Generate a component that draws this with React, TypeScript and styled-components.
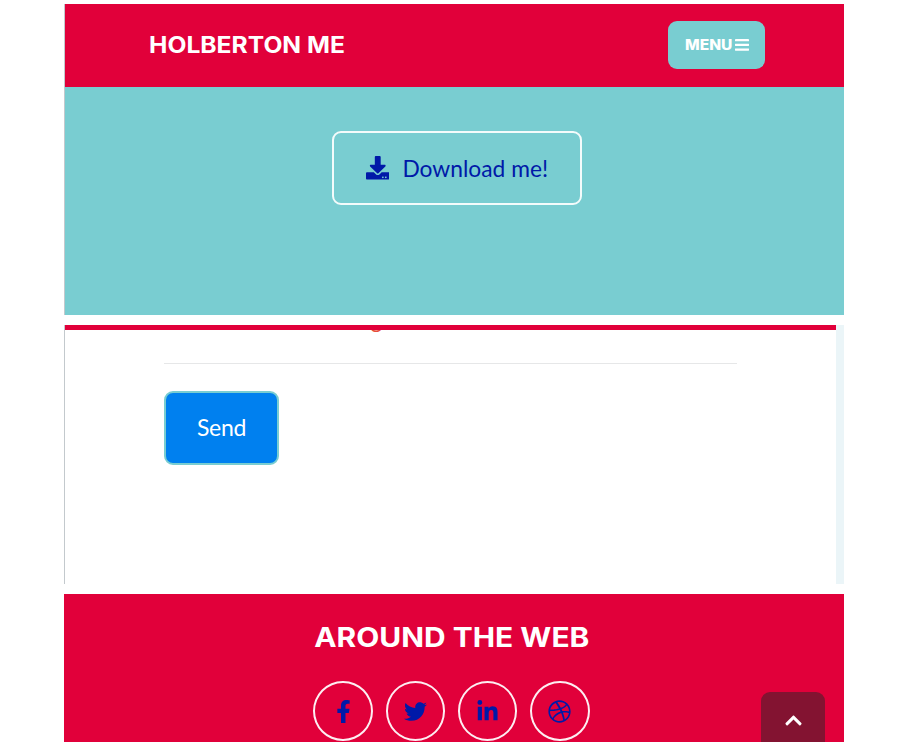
import React from 'react';
import styled, { createGlobalStyle } from 'styled-components';
import { FaChevronUp, FaDownload, FaDribbble, FaFacebookF, FaLinkedinIn, FaTwitter } from 'react-icons/fa';

const red = '#e1003a';
const teal = '#79cdd1';
const navy = '#0019a8';

const GlobalStyle = createGlobalStyle`
  * { box-sizing: border-box; }
  body { margin: 0; background: #fff; overflow: hidden; font-family: Lato, sans-serif; }
`;

const Page = styled.div`
  width: 907px;
  height: 742px;
  padding: 4px 63px 0 64px;
  overflow: hidden;
  display: flex;
  flex-direction: column;
  gap: 10px;
`;

const Panel = styled.section<{ $height: number }>`
  flex: none;
  height: ${p => p.$height}px;
  border-left: 1px solid #c3c9cd;
  overflow: hidden;
`;

const Navbar = styled.header`
  height: 83px;
  padding: 0 79px 0 84px;
  background: ${red};
  display: flex;
  align-items: center;
  justify-content: space-between;
`;

const Brand = styled.div`
  margin-top: -2px;
  font: 700 22.4px/30px Inter, sans-serif;
  color: #fff;
  white-space: nowrap;
  transform: scaleX(1.1);
  transform-origin: left center;
`;

const MenuButton = styled.button`
  width: 97px;
  height: 48px;
  margin-top: -2px;
  padding: 0 0 0 17px;
  border: 0;
  border-radius: 9px;
  background: ${teal};
  color: #fff;
  display: flex;
  align-items: center;
  font: 800 14px/20px Inter, sans-serif;
`;

const MenuLabel = styled.span`
  width: 50px;
  text-align: left;
  transform: scaleX(1.11);
  transform-origin: left center;
`;

const Hero = styled.div`
  height: 228px;
  padding-top: 44px;
  padding-left: 5px;
  background: ${teal};
  display: flex;
  justify-content: center;
  align-items: flex-start;
`;

const DownloadButton = styled.button`
  width: 250px;
  height: 74px;
  padding: 0;
  border: 2px solid #f4fbfb;
  border-radius: 9px;
  background: transparent;
  color: ${navy};
  display: flex;
  align-items: center;
  justify-content: center;
  gap: 13px;
  font: 400 22.8px/36px Lato, sans-serif;
`;

const FormPanel = styled(Panel)`
  border-right: 8px solid #ebf5f8;
`;

const NavEdge = styled.div`
  height: 5px;
  background: ${red};
`;

const Form = styled.div`
  padding: 0 99px;
`;

const ErrorClip = styled.div`
  height: 33px;
  overflow: hidden;
`;

const ErrorText = styled.p`
  margin: -24px 0 0;
  color: #e74c3c;
  font-size: 22.7px;
  line-height: 28px;
`;

const Rule = styled.hr`
  margin: 0 0 27px;
  border: 0;
  height: 1px;
  background: #e6e7e8;
`;

const SendButton = styled.button`
  width: 115px;
  height: 74px;
  padding: 0 0 2px;
  border: 2px solid ${teal};
  border-radius: 9px;
  background: #0080ef;
  color: #fff;
  font: 400 23px/34px Lato, sans-serif;
  letter-spacing: -0.3px;
`;

const Footer = styled.footer`
  position: relative;
  flex: none;
  width: 780px;
  height: 148px;
  background: ${red};
  padding: 26px 5px 0 0;
  display: flex;
  flex-direction: column;
  align-items: center;
`;

const FooterTitle = styled.h4`
  margin: 0;
  font: 700 26.5px/34px Inter, sans-serif;
  color: #fff;
  white-space: nowrap;
  transform: scaleX(1.13);
`;

const Socials = styled.div`
  margin-top: 27px;
  display: flex;
  gap: 12.6px;
`;

const Social = styled.a`
  width: 59.6px;
  height: 60px;
  border: 2px solid #fdeef2;
  border-radius: 50%;
  display: flex;
  align-items: center;
  justify-content: center;
  color: ${navy};
  font-size: 23px;
`;

const ToTop = styled.button`
  position: absolute;
  right: 19px;
  top: 98px;
  width: 64px;
  height: 64px;
  padding: 0 0 7px;
  border: 0;
  border-radius: 9px;
  background: #831331;
  color: #fff;
  display: flex;
  align-items: center;
  justify-content: center;
`;

const socialIcons = [FaFacebookF, FaTwitter, FaLinkedinIn, FaDribbble];

const MenuIcon = () => (
  <svg width="14" height="12" viewBox="0 0 14 12" fill="currentColor">
    <rect width="14" height="2.3" rx="0.4" />
    <rect y="4.7" width="14" height="2.3" rx="0.4" />
    <rect y="9.4" width="14" height="2.3" rx="0.4" />
  </svg>
);

export default function App() {
  return (
    <>
      <GlobalStyle />
      <Page>
        <Panel $height={311}>
          <Navbar>
            <Brand>HOLBERTON ME</Brand>
            <MenuButton><MenuLabel>MENU</MenuLabel><MenuIcon /></MenuButton>
          </Navbar>
          <Hero>
            <DownloadButton><FaDownload size={23.5} />Download me!</DownloadButton>
          </Hero>
        </Panel>
        <FormPanel $height={259}>
          <NavEdge />
          <Form>
            <ErrorClip><ErrorText>Please enter a message.</ErrorText></ErrorClip>
            <Rule />
            <SendButton>Send</SendButton>
          </Form>
        </FormPanel>
        <Footer>
          <FooterTitle>AROUND THE WEB</FooterTitle>
          <Socials>
            {socialIcons.map((Icon, i) => <Social key={i}><Icon /></Social>)}
          </Socials>
          <ToTop><FaChevronUp size={19} /></ToTop>
        </Footer>
      </Page>
    </>
  );
}
